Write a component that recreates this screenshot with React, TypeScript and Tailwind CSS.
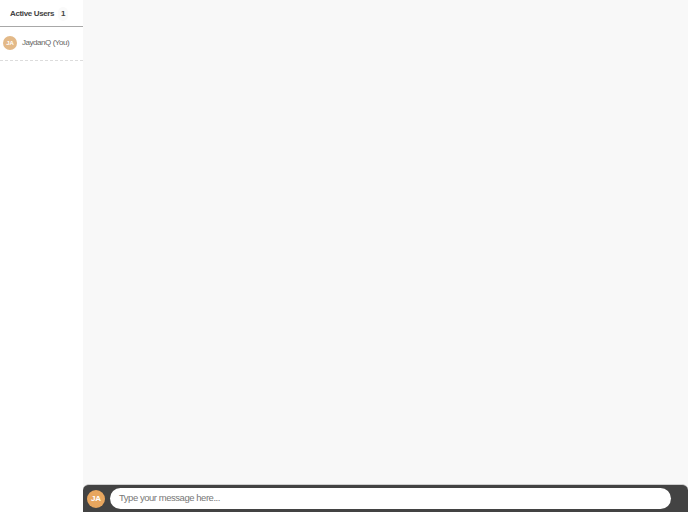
export default function App() {
  return (
    <div className="flex h-[512px] w-[688px] overflow-hidden bg-[#f8f8f8] font-['Liberation_Sans',sans-serif]">
      <aside className="flex w-[83px] shrink-0 flex-col bg-white">
        <div className="flex h-[27px] items-center border-b border-[#a8a8a8] pl-[10px] pt-[1px]">
          <span className="text-[8px] font-bold tracking-[-0.36px] text-[#444]">Active Users</span>
          <span className="ml-[4px] flex h-[14px] w-[10px] items-center justify-center rounded-full bg-[#fafafa] text-[8px] font-bold text-[#444]">
            1
          </span>
        </div>
        <div className="flex h-[34px] items-center border-b border-dashed border-[#dcdcdc] pb-[1px] pl-[3px]">
          <div className="flex h-[14px] w-[14px] items-center justify-center rounded-full bg-[#e3b988] text-[6px] font-bold text-white">
            JA
          </div>
          <span className="ml-[5px] text-[8px] tracking-[-0.45px] text-[#666]">JaydanQ (You)</span>
        </div>
      </aside>
      <main className="flex min-w-0 flex-1 flex-col">
        <div className="flex-1" />
        <div className="flex h-[28px] items-center rounded-tl-[6px] rounded-tr-[6px] border-t border-[#cfcfcf] bg-[#434343] pl-[4px] pr-[17px]">
          <div className="flex h-[18px] w-[18px] shrink-0 items-center justify-center rounded-full bg-[#e8a65f] text-[8px] font-bold text-white">
            JA
          </div>
          <div className="ml-[5px] flex h-[21px] flex-1 items-center rounded-full bg-white pl-[9px] text-[9.5px] tracking-[-0.46px] text-[#777]">
            Type your message here...
          </div>
        </div>
      </main>
    </div>
  );
}
